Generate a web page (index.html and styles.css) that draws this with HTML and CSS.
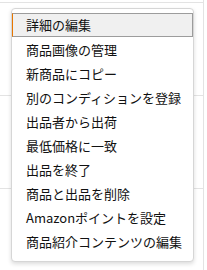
FILE: index.html
```html
<!DOCTYPE html>
<html lang="ja">
<head>
<meta charset="utf-8">
<link rel="stylesheet" href="styles.css">
</head>
<body>
<div class="backdrop">
  <div class="bg-row first"></div>
  <div class="bg-row"></div>
  <div class="bg-row"></div>
</div>
<ul class="menu">
  <li class="item active">詳細の編集</li>
  <li class="item">商品画像の管理</li>
  <li class="item">新商品にコピー</li>
  <li class="item">別のコンディションを登録</li>
  <li class="item">出品者から出荷</li>
  <li class="item">最低価格に一致</li>
  <li class="item">出品を終了</li>
  <li class="item">商品と出品を削除</li>
  <li class="item">Amazonポイントを設定</li>
  <li class="item">商品紹介コンテンツの編集</li>
</ul>
</body>
</html>
```
FILE: styles.css
```css
html, body {
  margin: 0;
  padding: 0;
  background: #fff;
  width: 207px;
  height: 270px;
  overflow: hidden;
}
body {
  position: relative;
  font-family: "Noto Sans CJK JP", "Noto Sans", sans-serif;
}
.backdrop {
  width: 204px;
  height: 270px;
  border-right: 1px solid #e3e3e3;
  padding-top: 2px;
  box-sizing: border-box;
}
.bg-row {
  height: 92px;
  border-top: 1px solid #e3e3e3;
}
.menu {
  position: absolute;
  left: 11px;
  top: 8px;
  width: 183px;
  height: 254px;
  box-sizing: border-box;
  margin: 0;
  padding: 5px 0 0;
  list-style: none;
  background: #fff;
  border: 1px solid #d6d6d6;
  border-radius: 4px;
  box-shadow: 0 2px 4px rgba(0,0,0,0.14);
}
.item {
  height: 24px;
  line-height: 24px;
  font-size: 13px;
  color: #111;
  padding-left: 13px;
  border-left: 1px solid transparent;
  white-space: nowrap;
  box-sizing: border-box;
}
.item.active {
  margin-top: -1px;
  height: 24px;
  line-height: 22px;
  background: #f0f0f0;
  border: 1px solid #9c9c9c;
  border-left: 1px solid #e77600;
  margin-bottom: 1px;
}
```
